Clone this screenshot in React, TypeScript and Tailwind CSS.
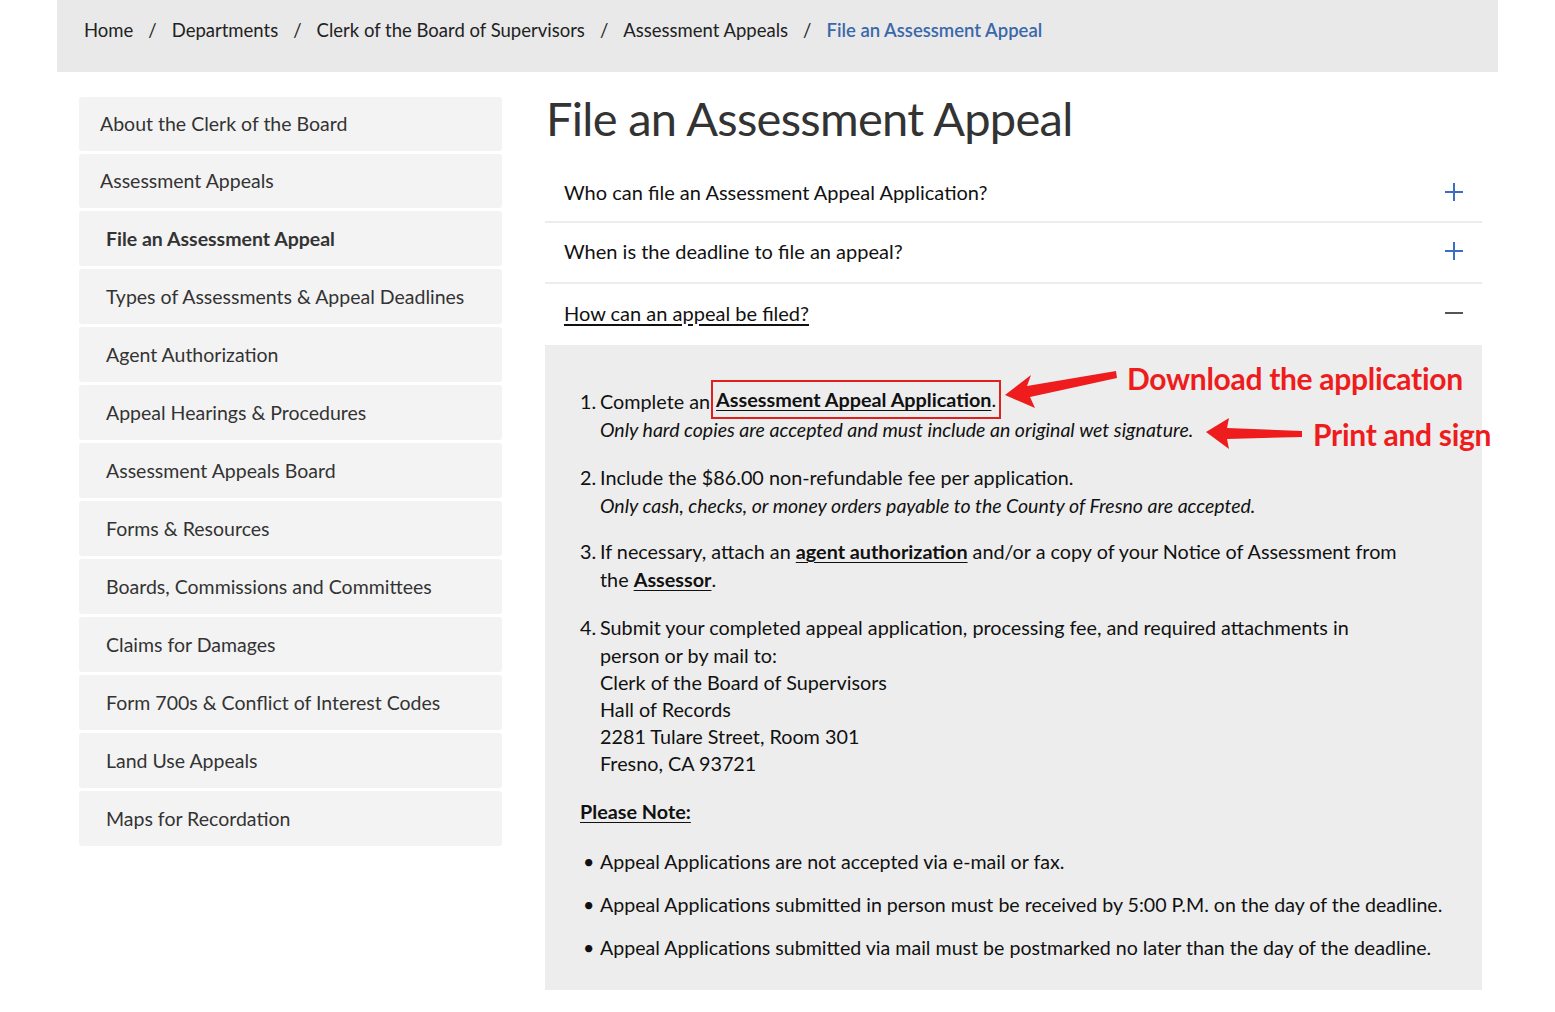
import React from "react";

const sideItems = [
  { label: "About the Clerk of the Board", indent: false },
  { label: "Assessment Appeals", indent: false },
  { label: "File an Assessment Appeal", indent: true, active: true },
  { label: "Types of Assessments & Appeal Deadlines", indent: true },
  { label: "Agent Authorization", indent: true },
  { label: "Appeal Hearings & Procedures", indent: true },
  { label: "Assessment Appeals Board", indent: true },
  { label: "Forms & Resources", indent: true },
  { label: "Boards, Commissions and Committees", indent: true },
  { label: "Claims for Damages", indent: true },
  { label: "Form 700s & Conflict of Interest Codes", indent: true },
  { label: "Land Use Appeals", indent: true },
  { label: "Maps for Recordation", indent: true },
];

const crumbs = ["Home", "Departments", "Clerk of the Board of Supervisors", "Assessment Appeals"];

const notes = [
  "Appeal Applications are not accepted via e-mail or fax.",
  "Appeal Applications submitted in person must be received by 5:00 P.M. on the day of the deadline.",
  "Appeal Applications submitted via mail must be postmarked no later than the day of the deadline.",
];

function PlusIcon() {
  return (
    <svg width="20" height="20" viewBox="0 0 20 20" className="shrink-0">
      <path d="M10 1v18M1 10h18" stroke="#3b6dc4" strokeWidth="2" fill="none" />
    </svg>
  );
}

function MinusIcon() {
  return (
    <svg width="20" height="20" viewBox="0 0 20 20" className="shrink-0">
      <path d="M1 10h18" stroke="#555" strokeWidth="2" fill="none" />
    </svg>
  );
}

export default function App() {
  return (
    <div className="relative w-[1555px] min-h-[1012px] bg-white text-[#222] font-['Lato','Liberation_Sans',sans-serif]">
      {/* breadcrumb */}
      <div className="mx-[57px] h-[72px] bg-[#e9e9e9] flex items-start pt-[17px] pl-[27px] text-[18.5px] text-[#222]">
        {crumbs.map((c) => (
          <span key={c} className="flex">
            <span>{c}</span>
            <span className="mx-[15px]">/</span>
          </span>
        ))}
        <span className="text-[#3a68aa] font-semibold">File an Assessment Appeal</span>
      </div>

      <div className="flex pl-[79px] pt-[25px] gap-[43px]">
        {/* sidebar */}
        <nav className="w-[423px] flex flex-col gap-[3px] shrink-0">
          {sideItems.map((it, i) => (
            <div
              key={it.label}
              className={`${i < 2 ? "h-[54px]" : "h-[55px]"} rounded-[3px] bg-[#f3f3f3] flex items-center text-[19.5px] text-[#333] ${
                it.indent ? "pl-[27px]" : "pl-[21px]"
              } ${it.active ? "font-bold" : ""}`}
            >
              {it.label}
            </div>
          ))}
        </nav>

        {/* main */}
        <main className="w-[937px] -mt-[2px]">
          <h1 className="text-[47px] tracking-[-0.7px] leading-none text-[#333] pl-[1px] h-[67px]">
            File an Assessment Appeal
          </h1>

          <div className="flex items-center justify-between h-[61px] pl-[19px] pr-[18px] border-b-2 border-[#ececec] text-[20px] text-[#111]">
            <span>Who can file an Assessment Appeal Application?</span>
            <PlusIcon />
          </div>
          <div className="flex items-center justify-between h-[61px] pl-[19px] pr-[18px] pb-[3px] border-b-2 border-[#ececec] text-[20px] text-[#111]">
            <span>When is the deadline to file an appeal?</span>
            <PlusIcon />
          </div>
          <div className="flex items-center justify-between h-[61px] pl-[19px] pr-[18px] pb-[4px] text-[20px] text-[#111]">
            <span className="underline underline-offset-[3px]">How can an appeal be filed?</span>
            <MinusIcon />
          </div>

          {/* expanded panel */}
          <div className="bg-[#ededed] pt-[42px] pb-[28px] pl-[35px] pr-[20px] text-[19.8px] text-[#111] leading-[28px]">
            <ol className="flex flex-col gap-[19px]">
              <li className="flex">
                <span className="w-[20px] shrink-0">1.</span>
                <div>
                  <div>
                    Complete an
                    <span className="inline-block border-2 border-[#e0201c] px-[3px] -my-[8px] py-[7px] ml-[1px] leading-[21px] relative -top-[2px]">
                      <a className="font-bold underline underline-offset-[3px]">Assessment Appeal Application</a>.
                    </span>
                  </div>
                  <div className="italic text-[19.5px] leading-[30px]">
                    Only hard copies are accepted and must include an original wet signature.
                  </div>
                </div>
              </li>
              <li className="flex -mt-[1px]">
                <span className="w-[20px] shrink-0">2.</span>
                <div>
                  <div>Include the $86.00 non-refundable fee per application.</div>
                  <div className="italic text-[19.5px] leading-[29px]">
                    Only cash, checks, or money orders payable to the County of Fresno are accepted.
                  </div>
                </div>
              </li>
              <li className="flex -mt-[2px]">
                <span className="w-[20px] shrink-0">3.</span>
                <div>
                  If necessary, attach an <a className="font-bold underline underline-offset-[3px]">agent authorization</a> and/or a copy of your Notice of Assessment from
                  <br />
                  the <a className="font-bold underline underline-offset-[3px]">Assessor</a>.
                </div>
              </li>
              <li className="flex mt-[1px]">
                <span className="w-[20px] shrink-0">4.</span>
                <div>
                  <div>
                    Submit your completed appeal application, processing fee, and required attachments in
                    <br />
                    person or by mail to:
                  </div>
                  <div className="leading-[27px]">
                    <div>Clerk of the Board of Supervisors</div>
                    <div>Hall of Records</div>
                    <div>2281 Tulare Street, Room 301</div>
                    <div>Fresno, CA 93721</div>
                  </div>
                </div>
              </li>
            </ol>

            <p className="mt-[20px] font-bold underline underline-offset-[3px] inline-block">Please Note:</p>

            <ul className="mt-[23px] flex flex-col gap-[15px] text-[19.6px]">
              {notes.map((t) => (
                <li key={t} className="flex">
                  <span className="w-[20px] shrink-0 pl-[3px]">•</span>
                  <span>{t}</span>
                </li>
              ))}
            </ul>
          </div>
        </main>
      </div>

      {/* annotations */}
      <svg className="absolute left-0 top-0 pointer-events-none" width="1555" height="1012">
        <polygon points="1005,395 1031,375 1027,386 1116,371 1117,378 1030,397 1035,408" fill="#ee1c1c" />
        <polygon points="1206,432 1229,418 1227,428 1302,431 1302,437 1227,439 1229,449" fill="#ee1c1c" />
      </svg>
      <div className="absolute left-[1127px] top-[359px] text-[30px] font-bold text-[#ee1c1c] leading-[38px] tracking-[-0.3px]">
        Download the application
      </div>
      <div className="absolute left-[1313px] top-[415px] text-[30px] font-bold text-[#ee1c1c] leading-[38px] tracking-[-0.3px]">
        Print and sign
      </div>
    </div>
  );
}
